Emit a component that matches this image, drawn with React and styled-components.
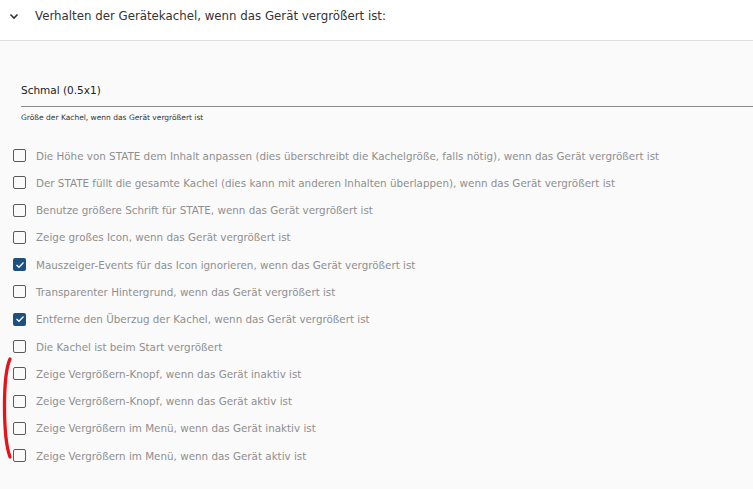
import React from 'react';
import styled, { createGlobalStyle } from 'styled-components';

const Global = createGlobalStyle`
  html, body { margin: 0; padding: 0; background: #fafafa; }
  body { font-family: "DejaVu Sans", "Liberation Sans", sans-serif; }
`;

const Page = styled.div`
  position: relative;
  width: 753px;
  height: 489px;
  overflow: hidden;
  background: #fafafa;
`;

const Header = styled.div`
  display: flex;
  align-items: center;
  height: 41px;
  padding-left: 9px;
  background: #fff;
  border-bottom: 1px solid #e0e0e0;
  box-sizing: border-box;
`;

const Chevron = styled.span`
  display: flex;
  width: 12px;
  margin-right: 14px;
  margin-top: -8px;
`;

const Title = styled.div`
  font-size: 11.8px;
  color: #333;
  margin-top: -8px;
`;

const Body = styled.div`
  padding: 43px 0 0 21px;
`;

const Select = styled.div`
  font-size: 10.5px;
  color: #222;
  padding-bottom: 10px;
  border-bottom: 1px solid #8a8a8a;
`;

const Helper = styled.div`
  font-size: 7.5px;
  color: #333;
  margin-top: 6px;
`;

const List = styled.div`
  display: flex;
  flex-direction: column;
  gap: 10.3px;
  margin: 25px 0 0 -8px;
`;

const Row = styled.label`
  display: flex;
  align-items: center;
  height: 17px;
  font-size: 10.35px;
  color: #8f8f8f;
`;

const Box = styled.span`
  width: 13px;
  height: 13px;
  box-sizing: border-box;
  border-radius: 2px;
  margin-right: 10px;
  display: flex;
  align-items: center;
  justify-content: center;
  border: ${p => (p.$checked ? 'none' : '1.5px solid #5a5a5a')};
  background: ${p => (p.$checked ? '#1d4f7f' : 'transparent')};
`;

const Annotation = styled.svg`
  position: absolute;
  left: 0;
  top: 354px;
`;

const items = [
  ['Die Höhe von STATE dem Inhalt anpassen (dies überschreibt die Kachelgröße, falls nötig), wenn das Gerät vergrößert ist', false],
  ['Der STATE füllt die gesamte Kachel (dies kann mit anderen Inhalten überlappen), wenn das Gerät vergrößert ist', false],
  ['Benutze größere Schrift für STATE, wenn das Gerät vergrößert ist', false],
  ['Zeige großes Icon, wenn das Gerät vergrößert ist', false],
  ['Mauszeiger-Events für das Icon ignorieren, wenn das Gerät vergrößert ist', true],
  ['Transparenter Hintergrund, wenn das Gerät vergrößert ist', false],
  ['Entferne den Überzug der Kachel, wenn das Gerät vergrößert ist', true],
  ['Die Kachel ist beim Start vergrößert', false],
  ['Zeige Vergrößern-Knopf, wenn das Gerät inaktiv ist', false],
  ['Zeige Vergrößern-Knopf, wenn das Gerät aktiv ist', false],
  ['Zeige Vergrößern im Menü, wenn das Gerät inaktiv ist', false],
  ['Zeige Vergrößern im Menü, wenn das Gerät aktiv ist', false],
];

export default function App() {
  return (
    <Page>
      <Global />
      <Header>
        <Chevron>
          <svg width="10" height="7" viewBox="0 0 10 7">
            <path d="M1.5 1.5 L5 5 L8.5 1.5" fill="none" stroke="#333" strokeWidth="1.6" />
          </svg>
        </Chevron>
        <Title>Verhalten der Gerätekachel, wenn das Gerät vergrößert ist:</Title>
      </Header>
      <Body>
        <Select>Schmal (0.5x1)</Select>
        <Helper>Größe der Kachel, wenn das Gerät vergrößert ist</Helper>
        <List>
          {items.map(([text, checked]) => (
            <Row key={text}>
              <Box $checked={checked}>
                {checked && (
                  <svg width="10" height="8" viewBox="0 0 10 8">
                    <path d="M1.5 4 L4 6.3 L8.5 1.5" fill="none" stroke="#fff" strokeWidth="1.3" />
                  </svg>
                )}
              </Box>
              {text}
            </Row>
          ))}
        </List>
      </Body>
      <Annotation width="20" height="110" viewBox="0 0 20 110">
        <path d="M10 5 C6 14, 4.5 30, 4.5 52 C4.5 76, 6 92, 10 103" fill="none" stroke="#e4141b" strokeWidth="3.3" strokeLinecap="round" />
      </Annotation>
    </Page>
  );
}
